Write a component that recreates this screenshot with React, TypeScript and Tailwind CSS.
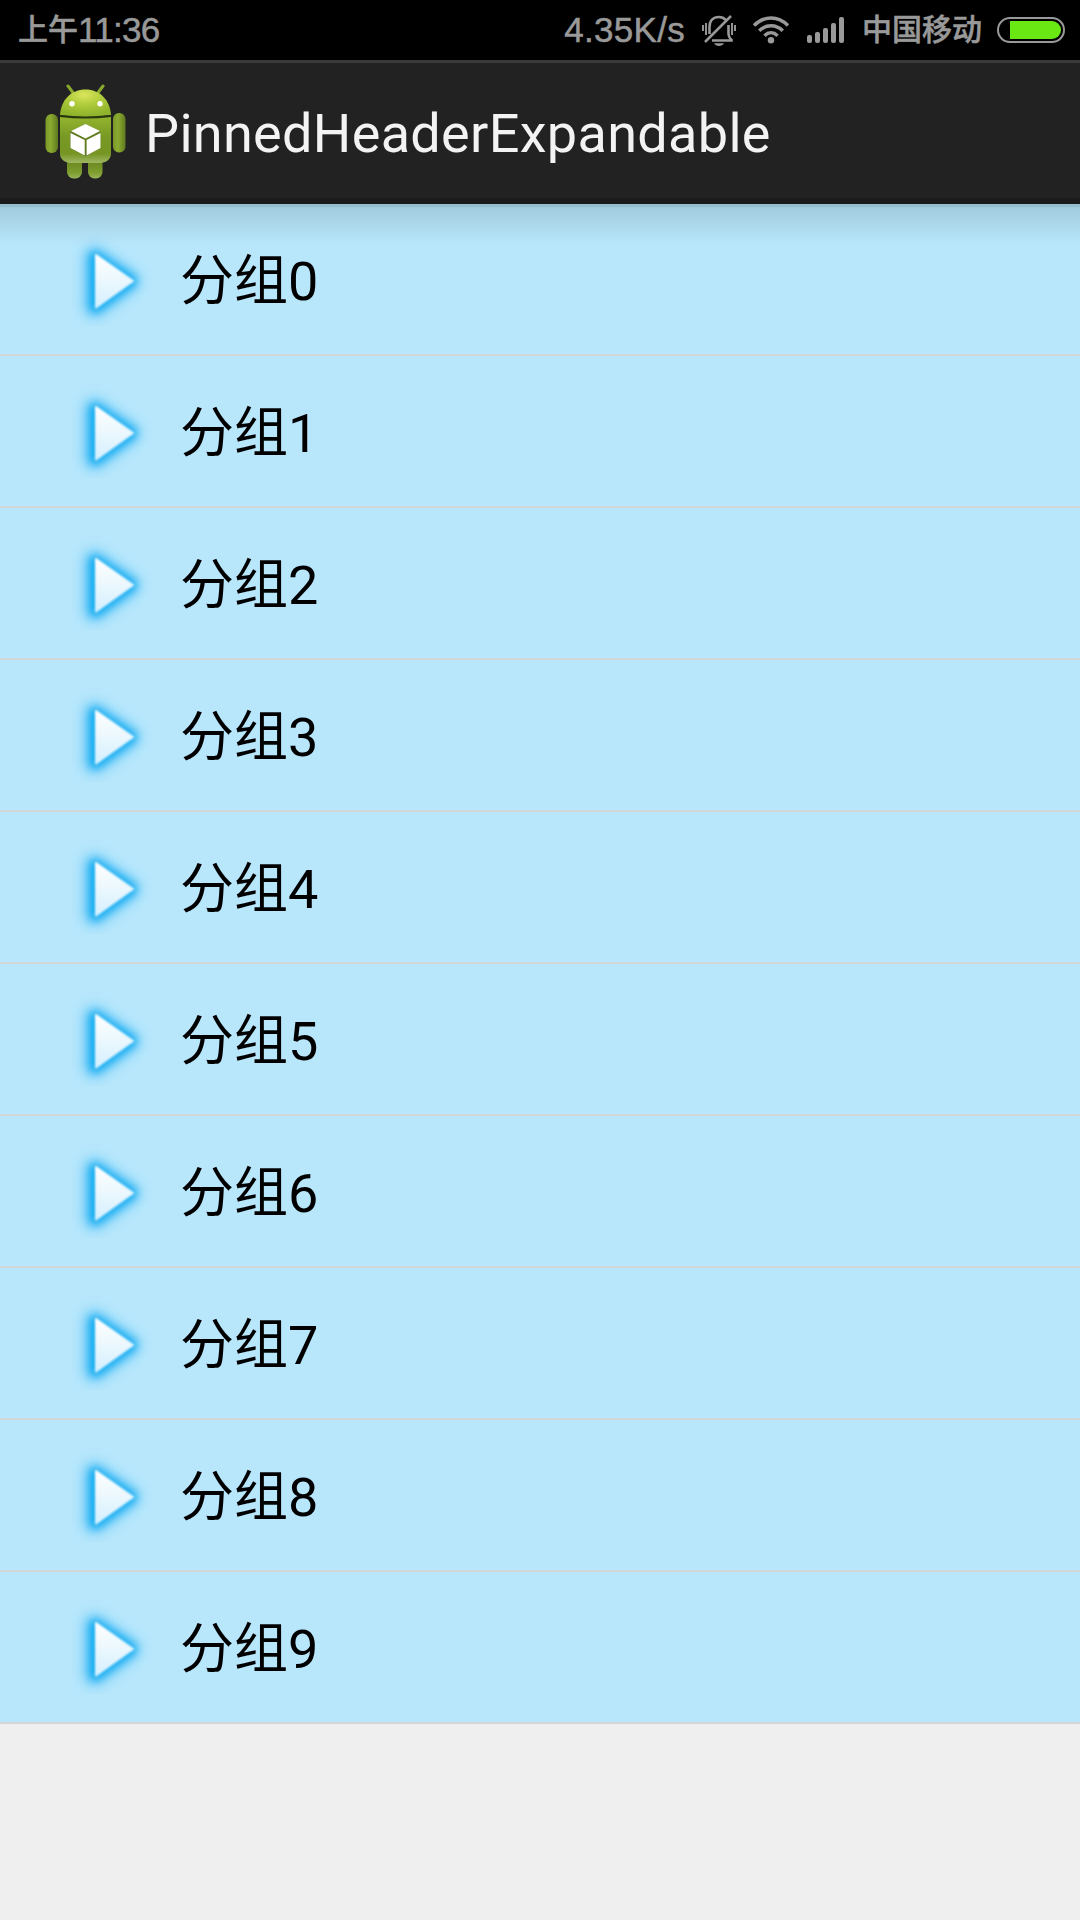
import React from 'react';

const groups = ['分组0', '分组1', '分组2', '分组3', '分组4', '分组5', '分组6', '分组7', '分组8', '分组9'];

function MutedBell() {
  return (
    <svg className="ml-[16px] h-[32px] w-[36px] shrink-0" viewBox="0 0 36 32" fill="none" stroke="#999999" strokeWidth="2.6">
      <path d="M2 11v6M5 9v12M31 9v12M34 11v6" strokeWidth="1.9" />
      <path d="M8.500 20V13C8.500 7 12 3 18 3C21 3 23 4 25 6M27.500 11V20C27.500 23 28.500 24 30.500 26V26.500H11" />
      <path d="M30 2L4 28" strokeWidth="2.5" />
      <path d="M13 29.2H23C22 31 20 32 18 32S14 31 13 29.2Z" fill="#999999" stroke="none" />
    </svg>
  );
}

function Wifi() {
  return (
    <svg className="ml-[15px] h-[28px] w-[38px] shrink-0" viewBox="0 0 38 28" fill="none" stroke="#999999" strokeWidth="3.4">
      <path d="M2 9.5C12 -0.5 26 -0.5 36 9.5" />
      <path d="M7.2 14.7C14 8 24 8 30.8 14.7" />
      <path d="M12.4 19.7C16.5 15.8 21.5 15.8 25.6 19.7" />
      <circle cx="19" cy="24.2" r="3.2" fill="#999999" stroke="none" />
    </svg>
  );
}

function Signal() {
  return (
    <div className="ml-[17px] flex h-[26px] items-end gap-[3px]">
      <i className="h-[8px] w-[5px] rounded-[2px] bg-[#999]" />
      <i className="h-[11px] w-[5px] rounded-[2px] bg-[#999]" />
      <i className="h-[15px] w-[5px] rounded-[2px] bg-[#999]" />
      <i className="h-[20px] w-[5px] rounded-[2px] bg-[#999]" />
      <i className="h-[26px] w-[5px] rounded-[2px] bg-[#999]" />
    </div>
  );
}

function AndroidLogo() {
  return (
    <svg className="mt-[2px] h-[96px] w-[84px] shrink-0" viewBox="0 0 84 96">
      <defs>
        <linearGradient id="limb" x1="0" x2="1" y1="0" y2="0">
          <stop offset="0" stopColor="#7a9828" />
          <stop offset=".4" stopColor="#8bab31" />
          <stop offset="1" stopColor="#5f7a1e" />
        </linearGradient>
        <linearGradient id="torso" x1="0" x2="0" y1="0" y2="1">
          <stop offset="0" stopColor="#94b52f" />
          <stop offset=".45" stopColor="#789923" />
          <stop offset=".8" stopColor="#769524" />
          <stop offset="1" stopColor="#a0b965" />
        </linearGradient>
        <radialGradient id="head" cx=".48" cy=".2" r=".75">
          <stop offset="0" stopColor="#dbe55c" />
          <stop offset=".45" stopColor="#b0cd3c" />
          <stop offset="1" stopColor="#8fb32c" />
        </radialGradient>
        <linearGradient id="foot" x1="0" x2="0" y1="0" y2="1">
          <stop offset="0" stopColor="#5f7d17" />
          <stop offset=".75" stopColor="#7f9e30" />
          <stop offset="1" stopColor="#9bb45c" />
        </linearGradient>
      </defs>
      <path d="M23 2L29 10M58 2L52 10" stroke="#88a92c" strokeWidth="3" strokeLinecap="round" />
      <rect x="22" y="72" width="15" height="22.5" rx="6.5" fill="url(#foot)" />
      <rect x="43" y="72" width="14.5" height="22.5" rx="6.5" fill="url(#foot)" />
      <rect x="0.5" y="30" width="12.5" height="39" rx="6" fill="url(#limb)" />
      <rect x="68" y="29" width="12.5" height="39.500" rx="6" fill="url(#limb)" />
      <path d="M15 32H66V70C66 75 61 79 55 79H26C20 79 15 75 15 70Z" fill="url(#torso)" />
      <path d="M15 31C16 16 26 5.500 40.500 5.500S65 16 66 31Q40 35 15 31Z" fill="url(#head)" />
      <path d="M15 32Q40 35 66 32" fill="none" stroke="#29370c" strokeWidth="1.9" />
      <circle cx="27" cy="19.700" r="2.700" fill="#fff" />
      <circle cx="55" cy="19.700" r="2.700" fill="#fff" />
      <path d="M40.500 40L55.500 47.500V64L40.500 72.500L25 64V47.500Z" fill="#50681b" opacity=".6" />
      <path d="M40.500 40L55 47L40.500 54.500L26 47ZM25.500 49L39.700 56V71.500L25.500 64ZM55.500 49V64L41.600 71.500V56Z" fill="#fff" />
    </svg>
  );
}

function PlayArrow() {
  return (
    <svg className="mb-[6px] h-[100px] w-[100px] shrink-0" viewBox="0 0 100 100">
      <defs>
        <linearGradient id="arrow" x1="0" x2="0" y1="0" y2="1">
          <stop offset="0" stopColor="#ffffff" />
          <stop offset="1" stopColor="#d6f0fe" />
        </linearGradient>
        <filter id="wide" filterUnits="userSpaceOnUse" x="0" y="0" width="100" height="100" colorInterpolationFilters="sRGB">
          <feGaussianBlur stdDeviation="7" />
        </filter>
        <filter id="near" filterUnits="userSpaceOnUse" x="0" y="0" width="100" height="100" colorInterpolationFilters="sRGB">
          <feGaussianBlur stdDeviation="4.5" />
        </filter>
        <filter id="edge" filterUnits="userSpaceOnUse" x="0" y="0" width="100" height="100" colorInterpolationFilters="sRGB">
          <feGaussianBlur stdDeviation="0.8" />
        </filter>
      </defs>
      <path d="M34 30L70 55L34 82Z" fill="#3cb9f5" stroke="#3cb9f5" strokeWidth="20" strokeLinejoin="round" opacity=".65" filter="url(#wide)" />
      <path d="M35 31L71 55L35 81Z" fill="#08a8f0" stroke="#08a8f0" strokeWidth="11" strokeLinejoin="round" opacity=".95" filter="url(#near)" />
      <path d="M36 29L73 55L36 81.500Z" fill="url(#arrow)" stroke="url(#arrow)" strokeWidth="2" strokeLinejoin="round" filter="url(#edge)" />
    </svg>
  );
}

export default function App() {
  return (
    <div className="h-[1920px] w-[1080px] overflow-hidden bg-[#efefef] font-['Roboto','Noto_Sans_CJK_SC',sans-serif]">
      <header className="flex h-[60px] items-center bg-black pr-[15px] pl-[18px] font-['Liberation_Sans','Noto_Sans_CJK_SC',sans-serif] text-[35px] leading-[60px] text-[#999] [-webkit-text-stroke:0.5px_#999]">
        <span className="text-[30px] font-medium">上午</span>
        <span className="mr-auto tracking-[-0.7px]">11:36</span>
        <span className="tracking-[0.3px]">4.35K/s</span>
        <MutedBell />
        <Wifi />
        <Signal />
        <span className="ml-[18px] text-[30px] font-medium">中国移动</span>
        <div className="ml-[15px] flex h-[26px] w-[68px] items-center justify-end rounded-full border-2 border-[#999] pr-[2px]">
          <div className="h-[18px] w-[51px] rounded-r-full bg-[#69e814]" />
        </div>
      </header>
      <div className="flex h-[144px] items-center border-t-[3px] border-b-[6px] border-t-[#3a3a3a] border-b-[#1b1b1b] bg-[#222] pl-[45px]">
        <AndroidLogo />
        <h1 className="ml-[16px] pt-[7px] text-[54px] leading-[64px] font-normal tracking-[0.32px] text-[#f3f3f3]">PinnedHeaderExpandable</h1>
      </div>
      <main className="relative">
        <ul>
          {groups.map((name) => (
            <li key={name} className="flex h-[152px] items-center border-b-2 border-[#d6d6d6] bg-[#b8e7fc] pl-[60px]">
              <PlayArrow />
              <span className="ml-[20px] pt-[6px] text-[54px] leading-[64px] text-black">{name}</span>
            </li>
          ))}
        </ul>
        <div className="pointer-events-none absolute inset-x-0 top-0 h-[42px] border-t-[3px] border-black/18 bg-linear-to-b from-black/12 to-transparent bg-clip-padding" />
      </main>
    </div>
  );
}
